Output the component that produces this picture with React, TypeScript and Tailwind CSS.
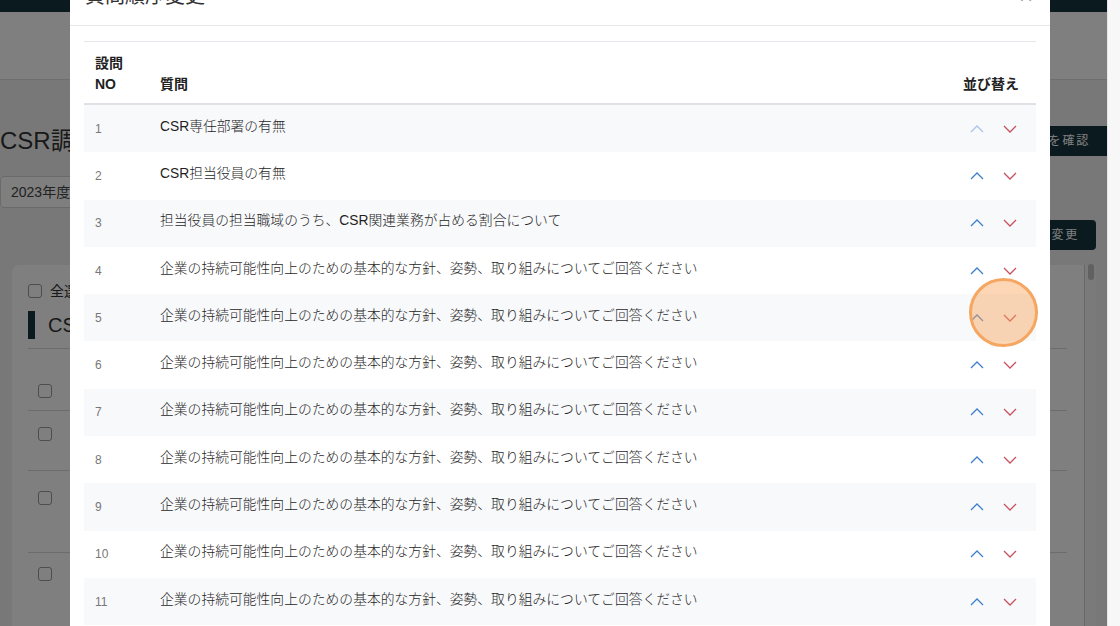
import React from "react";

const longQ =
  "企業の持続可能性向上のための基本的な方針、姿勢、取り組みについてご回答ください";

const questions = [
  "CSR専任部署の有無",
  "CSR担当役員の有無",
  "担当役員の担当職域のうち、CSR関連業務が占める割合について",
  longQ,
  longQ,
  longQ,
  longQ,
  longQ,
  longQ,
  longQ,
  longQ,
];

function UpIcon({ faded }: { faded?: boolean }) {
  return (
    <svg
      width="14"
      height="8"
      viewBox="0 0 14 8"
      className={faded ? "text-[#a9c6e8]" : "text-[#3f80cc]"}
    >
      <polyline points="1,7 7,1 13,7" fill="none" stroke="currentColor" strokeWidth="1.3" />
    </svg>
  );
}

function DownIcon() {
  return (
    <svg width="14" height="8" viewBox="0 0 14 8" className="text-[#c9505e]">
      <polyline points="1,1 7,7 13,1" fill="none" stroke="currentColor" strokeWidth="1.3" />
    </svg>
  );
}

function Checkbox() {
  return <div className="h-[14px] w-[14px] rounded-[3px] border border-[#9a9a9a] bg-white" />;
}

export default function App() {
  return (
    <div className="relative flex h-[626px] w-[1120px] overflow-hidden [font-family:'Liberation_Sans','Noto_Sans_CJK_JP',sans-serif]">
      {/* page behind the modal */}
      <div className="relative h-full w-[1107px] bg-[#f1f1f1]">
        <div className="h-[12px] bg-[#16343f]" />
        <div className="h-[68px] border-b border-[#dcdcdc] bg-white" />
        <main className="pr-[11px]">
          <div className="mt-[46px] flex h-[30px] items-center justify-between">
            <h1 className="text-[24px] text-[#333]">CSR調査回答一覧</h1>
            <button className="-mr-[11px] h-[30px] bg-[#16343f] pl-4 pr-[17px] text-[12px] tracking-[0.15em] text-white">
              進捗を確認
            </button>
          </div>
          <div className="mt-[20px] flex h-[32px]">
            <div className="flex w-[170px] items-center rounded border border-[#d5d5d5] bg-white pl-[10px] text-[14px] text-[#444]">
              2023年度
            </div>
          </div>
          <div className="mt-[12px] flex justify-end">
            <button className="h-[30px] rounded bg-[#16343f] pl-3 pr-[17px] text-[12px] tracking-[0.15em] text-white">
              表示順序変更
            </button>
          </div>
          <div className="ml-[12px] mt-[15px] flex h-[400px]">
            <div className="flex-1 rounded-tl-[8px] bg-white pl-[16px] pr-[17px] pt-[16px]">
              <div className="flex h-[20px] items-center gap-[8px] text-[14px] text-[#333]">
                <Checkbox />
                <span>全選択</span>
              </div>
              <div className="border-b border-[#d8d8d8] pb-[9px]">
                <div className="mt-[10px] flex h-[28px] items-center gap-[13px]">
                  <div className="h-[28px] w-[7px] bg-[#16343f]" />
                  <span className="text-[20px] text-[#333]">CSR推進体制について</span>
                </div>
              </div>
              <div className="h-[62px] border-b border-[#d8d8d8] pl-[10px] pt-[35px]">
                <Checkbox />
              </div>
              <div className="h-[60px] border-b border-[#d8d8d8] pl-[10px] pt-[16px]">
                <Checkbox />
              </div>
              <div className="h-[82px] border-b border-[#d8d8d8] pl-[10px] pt-[20px]">
                <Checkbox />
              </div>
              <div className="h-[80px] pl-[10px] pt-[14px]">
                <Checkbox />
              </div>
            </div>
            <div className="relative w-[12px] border-l border-[#cfcfcf] bg-[#f4f4f4]">
              <div className="mx-auto mt-[-1px] h-[16px] w-[6px] rounded-full bg-[#c2c2c2]" />
            </div>
          </div>
        </main>
        <div className="absolute inset-0 bg-black/50" />
      </div>
      <div className="h-full w-[13px] border-l border-[#e6e6e6] bg-[#f7f7f7]" />

      {/* modal */}
      <div className="absolute left-[70px] top-[-34px] h-[700px] w-[980px] bg-white">
        <div className="flex h-[60px] items-center justify-between border-b border-[#e5e7eb] pl-[15px] pr-[17px]">
          <h2 className="text-[20px] text-[#333]">質問順序変更</h2>
          <span className="text-[24px] leading-none text-[#9a9a9a]">×</span>
        </div>
        <div className="px-[14px] pt-[15px]">
          <div className="border-t border-[#e3e6ea]">
            <div className="grid h-[63px] grid-cols-[64px_1fr_90px] items-end border-b-2 border-[#dee2e6] pb-[8px] text-[14px] font-bold leading-[21px] text-[#222]">
              <div className="pl-[11px]">
                設問
                <br />
                NO
              </div>
              <div className="pl-[12px]">質問</div>
              <div className="text-center">並び替え</div>
            </div>
            {questions.map((q, i) => (
              <div
                key={i}
                className={`grid h-[47.3px] grid-cols-[64px_1fr_90px] items-center ${
                  i % 2 === 0 ? "bg-[#f8f9fb]" : "bg-white"
                }`}
              >
                <div className="pl-[11px] text-[12px] leading-[16px] text-[#777]">{i + 1}</div>
                <div className="pb-[4px] pl-[12px] text-[13.8px] font-light leading-[20px] text-[#1f1f1f]">
                  {q}
                </div>
                <div className="flex items-center justify-center gap-[19px] pl-[4px]">
                  <UpIcon faded={i === 0} />
                  <DownIcon />
                </div>
              </div>
            ))}
          </div>
        </div>
      </div>

      {/* click highlight */}
      <div className="absolute left-[969px] top-[278px] h-[69px] w-[69px] rounded-full border-[3px] border-[#f5a660] bg-[#f9a35a]/45" />
    </div>
  );
}
